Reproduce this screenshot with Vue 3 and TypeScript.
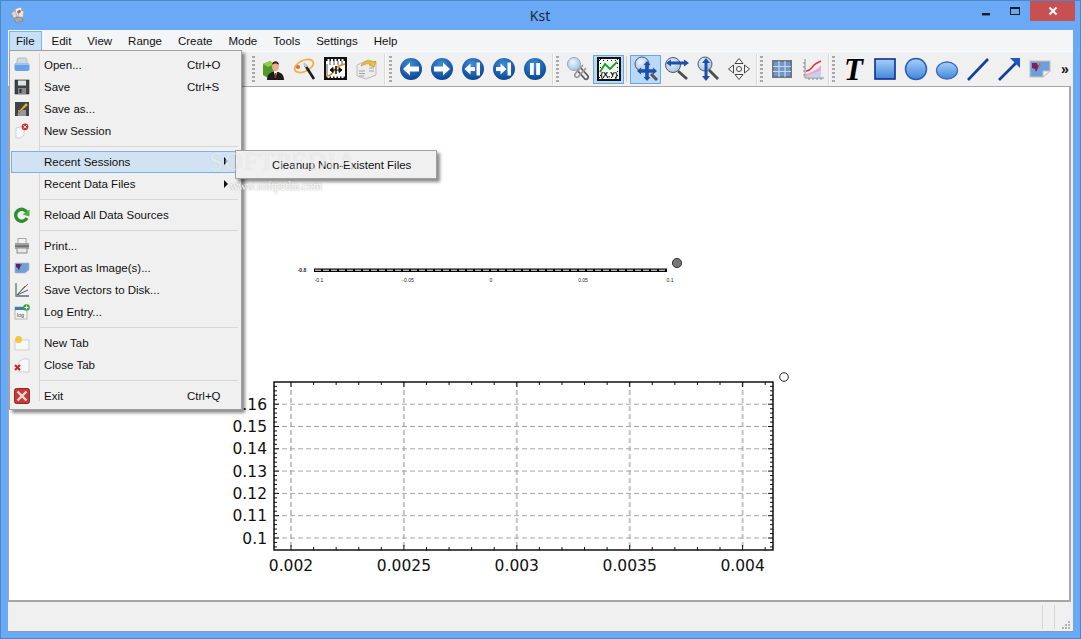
<script setup lang="ts">
// Kst main window with the File menu open and the Recent Sessions submenu showing.
const menus = ['File', 'Edit', 'View', 'Range', 'Create', 'Mode', 'Tools', 'Settings', 'Help']

// Screen-space geometry of the lower plot, read off the reference.
const X0 = 291
const X_STEP = 112.9
const Y0 = 538
const Y_STEP = 22.3
const LEFT = 274
const RIGHT = 773
const TOP = 382
const BOTTOM = 550

const xMajor = ['0.002', '0.0025', '0.003', '0.0035', '0.004'].map((t, i) => ({ t, x: X0 + i * X_STEP }))
const yMajor = ['0.1', '0.11', '0.12', '0.13', '0.14', '0.15', '0.16'].map((t, i) => ({ t, y: Y0 - i * Y_STEP }))

const xMinor: number[] = []
for (let i = -1; i < 25; i++) {
  const x = X0 + (i * X_STEP) / 5
  if (x > LEFT && x < RIGHT && i % 5 !== 0) xMinor.push(x)
}
const yMinor: number[] = []
for (let i = -2; i < 36; i++) {
  const y = Y0 - (i * Y_STEP) / 5
  if (y > TOP && y < BOTTOM && i % 5 !== 0) yMinor.push(y)
}

const miniLabels = [
  { t: '-0.1', x: 319 },
  { t: '-0.05', x: 408 },
  { t: '0', x: 491 },
  { t: '0.05', x: 583 },
  { t: '0.1', x: 670 }
]
</script>

<template>
  <div class="window">
    <svg class="defs" width="0" height="0" aria-hidden="true">
      <defs>
        <radialGradient id="navBlue" cx="45%" cy="30%" r="75%">
          <stop offset="0" stop-color="#3f8fd8" />
          <stop offset="1" stop-color="#06408f" />
        </radialGradient>
        <linearGradient id="shapeBlue" x1="0" y1="0" x2="0" y2="1">
          <stop offset="0" stop-color="#a9d0f5" />
          <stop offset="1" stop-color="#3f86dc" />
        </linearGradient>
        <radialGradient id="lens" cx="40%" cy="35%" r="70%">
          <stop offset="0" stop-color="#eef5fc" />
          <stop offset="1" stop-color="#9cc0e2" />
        </radialGradient>
      </defs>
    </svg>

    <header class="titlebar">
      <svg class="app-icon" width="18" height="18" viewBox="0 0 18 18">
        <path d="M2 7l6-4 3 5-6 5z" fill="#d8d8d8" stroke="#8f8f8f" stroke-width=".7" />
        <path d="M6 3l6-2 2 7-6 3z" fill="#f5f5f5" stroke="#9a9a9a" stroke-width=".7" />
        <path d="M10 4l5 1-1 7-5-1z" fill="#e6e6e6" stroke="#9a9a9a" stroke-width=".7" />
        <path d="M8 5l3-1 1 2-3 2z" fill="#c9544f" />
        <path d="M5 12l8-1 1 4-7 2z" fill="#a8a8a8" stroke="#777" stroke-width=".5" />
      </svg>
      <span class="title">Kst</span>
      <div class="caption">
        <svg class="cap-btn" width="27" height="20" viewBox="0 0 27 20"><rect x="6" y="12" width="8" height="2.4" fill="#1b1b1b" /></svg>
        <svg class="cap-btn" width="27" height="20" viewBox="0 0 27 20"><rect x="7.500" y="6.500" width="9" height="7" fill="none" stroke="#1b1b1b" /><rect x="7" y="6" width="10" height="2" fill="#1b1b1b" /></svg>
        <div class="cap-close">
          <svg width="10" height="10" viewBox="0 0 10 10"><path d="M1.500 1.500l7 7M8.500 1.500l-7 7" stroke="#fff" stroke-width="2" /></svg>
        </div>
      </div>
    </header>

    <div class="client">
      <nav class="menubar">
        <span v-for="(m, i) in menus" :key="m" class="menu-title" :class="{ open: i === 0 }">{{ m }}</span>
      </nav>

      <div class="toolbar">
        <div class="tb-hidden"></div>

        <div class="tg">
          <i class="grip"></i>
          <span class="tb">
            <svg width="26" height="26" viewBox="0 0 26 26">
              <path d="M2 8l7-3 4 3v11l-6 3-5-3z" fill="#4f9a2b" />
              <path d="M9 5l4 3-6 3-5-3z" fill="#8bd14c" />
              <path d="M6 24c0-6 4-8 6-8h4c3 0 7 2 7 8z" fill="#1c1c1c" />
              <path d="M13 16l1.500 6 1.500-6z" fill="#fff" /><path d="M14 17h1l.5 5h-2z" fill="#b8252a" />
              <ellipse cx="14.500" cy="10.500" rx="3.600" ry="4.800" fill="#e5b08c" />
              <path d="M11 9c0-5 7-5 7 0-2-2-5-2-7 0z" fill="#3c2415" />
            </svg>
          </span>
          <span class="tb">
            <svg width="26" height="26" viewBox="0 0 26 26">
              <ellipse cx="12" cy="10" rx="10" ry="5.500" transform="rotate(-25 12 10)" fill="none" stroke="#f2b04a" stroke-width="1.800" />
              <circle cx="6" cy="11" r="2" fill="#e2682d" />
              <path d="M13 9l9 14" stroke="#1b1b1b" stroke-width="2.600" />
              <path d="M12 7l2.500 4" stroke="#c9c9c9" stroke-width="2.600" />
            </svg>
          </span>
          <span class="tb">
            <svg width="24" height="24" viewBox="0 0 24 24">
              <rect x="1" y="1" width="21" height="21" fill="#fff" stroke="#111" stroke-width="2" />
              <path d="M2 3h20M2 20.500h20" stroke="#111" stroke-width="2" stroke-dasharray="1.500 2" />
              <path d="M3 7v12M6 4v4M10 4v4M14 4v4M18 4v4" stroke="#555" />
              <path d="M3 19c6 0 6-6 10-9 3-2 5-2 8-3" fill="none" stroke="#d98a24" stroke-width="1.600" />
              <path d="M6 13h12M6 13l3-2.500v5zM18 13l-3-2.500v5z" stroke="#111" fill="#111" />
              <path d="M12 9v8" stroke="#111" stroke-width="1.500" />
            </svg>
          </span>
          <span class="tb">
            <svg width="24" height="24" viewBox="0 0 24 24">
              <path d="M2 8l11-5 8 2v13l-10 4-9-3z" fill="#ececec" stroke="#bdbdbd" />
              <path d="M4 14h6M4 16.500h6M4 19h5M14 11h5M14 14h5" stroke="#a2a2a2" />
              <path d="M6 9c2-5 8-6 12-4l3-1-2 6-5-2 2-1c-3-1-6 0-10 2z" fill="#f1c232" stroke="#b88a16" stroke-width=".6" />
            </svg>
          </span>
        </div>
        <i class="tb-line wide"></i>

        <div class="tg">
          <i class="grip"></i>
          <span class="tb">
            <svg width="24" height="24" viewBox="0 0 24 24"><circle cx="12" cy="12" r="11" fill="url(#navBlue)" /><path d="M4 12l7-6.500V9.500h9v5h-9v4z" fill="#fff" /></svg>
          </span>
          <span class="tb">
            <svg width="24" height="24" viewBox="0 0 24 24"><circle cx="12" cy="12" r="11" fill="url(#navBlue)" /><path d="M20 12l-7-6.500V9.500H4v5h9v4z" fill="#fff" /></svg>
          </span>
          <span class="tb">
            <svg width="24" height="24" viewBox="0 0 24 24"><circle cx="12" cy="12" r="11" fill="url(#navBlue)" /><path d="M3.500 12l6-5.500V10h4.500v4H9.500v3.500z" fill="#fff" /><rect x="15.500" y="5.500" width="3.500" height="13" fill="#fff" /></svg>
          </span>
          <span class="tb">
            <svg width="24" height="24" viewBox="0 0 24 24"><circle cx="12" cy="12" r="11" fill="url(#navBlue)" /><path d="M14.500 12l-6-5.500V10H4v4h4.500v3.500z" fill="#fff" /><rect x="15.500" y="5.500" width="3.500" height="13" fill="#fff" /></svg>
          </span>
          <span class="tb">
            <svg width="24" height="24" viewBox="0 0 24 24"><circle cx="12" cy="12" r="11" fill="url(#navBlue)" /><rect x="7" y="6" width="3.800" height="12" fill="#fff" /><rect x="13.200" y="6" width="3.800" height="12" fill="#fff" /></svg>
          </span>
        </div>
        <i class="tb-line"></i>

        <div class="tg">
          <i class="grip"></i>
          <span class="tb">
            <svg width="26" height="26" viewBox="0 0 26 26">
              <path d="M12 14l8 9c2 1 4-1 3-3l-8-9" fill="none" stroke="#5f5f5f" stroke-width="1.800" />
              <path d="M18 9l-8 9c-1 2 1 4 3 3l8-9" fill="none" stroke="#9a9a9a" stroke-width="1.800" />
              <circle cx="9" cy="8" r="6.500" fill="url(#lens)" stroke="#90a8c0" />
            </svg>
          </span>
          <span class="tb active">
            <svg width="24" height="24" viewBox="0 0 24 24">
              <rect x="1" y="1" width="22" height="22" fill="#f5f8f2" stroke="#111" stroke-width="2" />
              <path d="M2 3.500h20M2 20.500h20M3.500 2v20M20.500 2v20" stroke="#111" stroke-dasharray="1 3" />
              <path d="M3 15l5-8 5 5 7-7" fill="none" stroke="#16a21f" stroke-width="1.800" />
              <text x="12" y="19.500" class="xy">(X,Y)</text>
            </svg>
          </span>
          <i class="tb-inner"></i>
          <span class="tb active">
            <svg width="26" height="26" viewBox="0 0 26 26">
              <circle cx="9" cy="8" r="7" fill="url(#lens)" stroke="#4a5b6e" />
              <path d="M18 18l6 6" stroke="#555" stroke-width="3" />
              <path d="M14 8v14M7 15h14" stroke="#1f4fa8" stroke-width="3.600" />
              <path d="M14 5l3.500 4h-7zM14 25l3.500-4h-7zM4 15l4-3.500v7zM24 15l-4-3.500v7z" fill="#1f4fa8" />
            </svg>
          </span>
          <span class="tb">
            <svg width="26" height="26" viewBox="0 0 26 26">
              <path d="M14 15l9 8" stroke="#4d4d4d" stroke-width="2.800" />
              <circle cx="9" cy="9" r="7.500" fill="url(#lens)" stroke="#4a5b6e" />
              <path d="M5 7h16" stroke="#1f4fa8" stroke-width="3" />
              <path d="M2 7l5-3.500v7zM25 7l-5-3.500v7z" fill="#1f4fa8" />
            </svg>
          </span>
          <span class="tb">
            <svg width="26" height="26" viewBox="0 0 26 26">
              <path d="M14 14l9 9" stroke="#4d4d4d" stroke-width="2.800" />
              <circle cx="10" cy="8" r="7" fill="url(#lens)" stroke="#4a5b6e" />
              <path d="M11 5v17" stroke="#1f4fa8" stroke-width="3" />
              <path d="M11 2l4 5H7zM11 25l4-5H7z" fill="#1f4fa8" />
            </svg>
          </span>
          <span class="tb">
            <svg width="24" height="24" viewBox="0 0 24 24" fill="#fff" stroke="#444">
              <path d="M12 1.500l4 5h-8zM12 22.500l4-5H8zM1.500 12l5-4v8zM22.500 12l-5-4v8z" />
              <circle cx="12" cy="12" r="2.500" />
            </svg>
          </span>
        </div>
        <i class="tb-line"></i>

        <div class="tg">
          <i class="grip"></i>
          <span class="tb">
            <svg width="22" height="22" viewBox="0 0 22 22">
              <rect x="2" y="3" width="18" height="16" fill="#7097c9" stroke="#6a7886" stroke-width="2" />
              <path d="M2 8.500h18M2 13.500h18M8 3v16M14 3v16" stroke="#c9d9ec" stroke-width="1.200" />
            </svg>
          </span>
          <span class="tb">
            <svg width="24" height="24" viewBox="0 0 24 24">
              <path d="M4 2v19h19" fill="none" stroke="#8a8a8a" />
              <path d="M5 20l4-2 5-2 6-2v6z" fill="#bcd6f2" />
              <path d="M5 17c5-1 6-3 9-4 3-1 4-3 6-5v6l-6 2-5 2-4 2z" fill="#f2a6d6" />
              <path d="M5 14c4 0 6-3 8-6 2-2 5-3 7-4" fill="none" stroke="#d8383f" stroke-width="1.500" />
              <path d="M2 6h2M2 10h2M2 14h2M2 18h2M8 21v2M12 21v2M16 21v2M20 21v2" stroke="#8a8a8a" />
            </svg>
          </span>
        </div>
        <i class="tb-line narrow"></i>

        <div class="tg">
          <i class="grip"></i>
          <span class="tb"><span class="tool-t">T</span></span>
          <span class="tb">
            <svg width="22" height="22" viewBox="0 0 22 22"><rect x="1" y="1" width="20" height="20" fill="url(#shapeBlue)" stroke="#0c2f96" stroke-width="1.600" /></svg>
          </span>
          <span class="tb">
            <svg width="24" height="24" viewBox="0 0 24 24"><circle cx="12" cy="12" r="10.500" fill="url(#shapeBlue)" stroke="#2a5cb8" stroke-width="1.500" /></svg>
          </span>
          <span class="tb">
            <svg width="24" height="24" viewBox="0 0 24 24"><ellipse cx="12" cy="13.500" rx="10.500" ry="8.500" fill="url(#shapeBlue)" stroke="#3e68c4" stroke-width="1.300" /></svg>
          </span>
          <span class="tb">
            <svg width="24" height="24" viewBox="0 0 24 24"><path d="M2 23L22 2" stroke="#123fa0" stroke-width="2.600" /></svg>
          </span>
          <span class="tb">
            <svg width="24" height="24" viewBox="0 0 24 24"><path d="M2 23L19 6" stroke="#123fa0" stroke-width="2.600" /><path d="M13 1h10v10z" fill="#1b56c4" /></svg>
          </span>
          <span class="tb">
            <svg width="24" height="24" viewBox="0 0 24 24">
              <path d="M2 4h20v10l-7 6H2z" fill="#6f9fd8" stroke="#c2c2c2" stroke-width="1.200" />
              <path d="M4 6h8l-2 5-2 4-1-3-3-1z" fill="#7c1f63" />
              <path d="M9 6h3l-2 3z" fill="#e0a03a" />
              <path d="M15 20l7-6h-7z" fill="#f3f3f3" stroke="#c2c2c2" />
            </svg>
          </span>
          <span class="chevrons">»</span>
        </div>
      </div>

      <main class="canvas">
        <svg class="sheet" width="1062" height="515" viewBox="9 87 1062 515">
          <!-- small squashed plot -->
          <text x="302" y="272" class="mini-y">-0.8</text>
          <rect x="314" y="268.500" width="353" height="3.500" fill="#000" />
          <line x1="315" y1="270.200" x2="666" y2="270.200" stroke="#fff" stroke-width="1" stroke-dasharray="6 2" />
          <text v-for="l in miniLabels" :key="l.t" :x="l.x" y="282" class="mini-x">{{ l.t }}</text>
          <circle cx="677" cy="263" r="4.600" fill="#777" stroke="#333" />

          <!-- main plot -->
          <line v-for="t in xMajor" :key="t.t" :x1="t.x" :y1="TOP" :x2="t.x" :y2="BOTTOM" class="grid-v" />
          <line v-for="t in yMajor" :key="t.t" :x1="LEFT" :y1="t.y" :x2="RIGHT" :y2="t.y" class="grid-h" />

          <g class="ticks">
            <template v-for="x in xMinor" :key="x">
              <line :x1="x" :y1="TOP" :x2="x" :y2="TOP + 3" />
              <line :x1="x" :y1="BOTTOM" :x2="x" :y2="BOTTOM - 3" />
            </template>
            <template v-for="t in xMajor" :key="t.t">
              <line :x1="t.x" :y1="TOP" :x2="t.x" :y2="TOP + 5" />
              <line :x1="t.x" :y1="BOTTOM" :x2="t.x" :y2="BOTTOM - 5" />
            </template>
            <template v-for="y in yMinor" :key="y">
              <line :x1="LEFT" :y1="y" :x2="LEFT + 3" :y2="y" />
              <line :x1="RIGHT" :y1="y" :x2="RIGHT - 3" :y2="y" />
            </template>
            <template v-for="t in yMajor" :key="t.t">
              <line :x1="LEFT" :y1="t.y" :x2="LEFT + 5" :y2="t.y" />
              <line :x1="RIGHT" :y1="t.y" :x2="RIGHT - 5" :y2="t.y" />
            </template>
          </g>
          <rect :x="LEFT" :y="TOP" :width="RIGHT - LEFT" :height="BOTTOM - TOP" class="plot-box" />

          <text v-for="t in yMajor" :key="t.t" :x="LEFT - 7" :y="t.y + 5.500" class="label" text-anchor="end">{{ t.t }}</text>
          <text v-for="t in xMajor" :key="t.t" :x="t.x" y="571" class="label" text-anchor="middle">{{ t.t }}</text>
          <circle cx="784" cy="377" r="4.300" fill="#fff" stroke="#222" />
        </svg>
      </main>

      <footer class="statusbar">
        <i class="status-sep"></i>
        <i class="status-sep"></i>
        <svg class="size-grip" width="9" height="9" viewBox="0 0 9 9" fill="#b4b4b4">
          <rect x="6" y="0" width="2" height="2" /><rect x="3" y="3" width="2" height="2" /><rect x="6" y="3" width="2" height="2" />
          <rect x="0" y="6" width="2" height="2" /><rect x="3" y="6" width="2" height="2" /><rect x="6" y="6" width="2" height="2" />
        </svg>
      </footer>

      <!-- open File menu -->
      <div class="menu">
        <div class="gutter-line"></div>
        <div class="item">
          <svg class="ico" width="16" height="16" viewBox="0 0 16 16">
            <path d="M3 3q0-2 2-2h6q2 0 2 2v4H3z" fill="#d4d8dc" stroke="#b5bcc4" />
            <rect x="0.500" y="6" width="15" height="8" rx="2" fill="#6aa0e8" />
            <rect x="1" y="6" width="14" height="2" fill="#9cc3f3" />
          </svg>
          <span class="lbl">Open...</span><span class="key">Ctrl+O</span>
        </div>
        <div class="item">
          <svg class="ico" width="16" height="16" viewBox="0 0 16 16">
            <rect x="1" y="1" width="14" height="14" fill="#3e4347" stroke="#2a2a2a" stroke-width=".6" />
            <rect x="4" y="1.500" width="8" height="5" fill="#dfe3e6" />
            <rect x="4" y="9" width="8" height="6" fill="#85898d" /><rect x="5.500" y="10" width="2" height="4" fill="#2f3235" />
          </svg>
          <span class="lbl">Save</span><span class="key">Ctrl+S</span>
        </div>
        <div class="item">
          <svg class="ico" width="16" height="16" viewBox="0 0 16 16">
            <rect x="1" y="1" width="14" height="14" fill="#3e4347" />
            <rect x="4" y="9" width="8" height="6" fill="#96999c" />
            <path d="M3 14l2-4 7-8 2 2-8 7z" fill="#e5b73a" stroke="#7a5d14" stroke-width=".5" />
          </svg>
          <span class="lbl">Save as...</span>
        </div>
        <div class="item">
          <svg class="ico" width="16" height="16" viewBox="0 0 16 16">
            <path d="M2 5l8-2v9l-4 3H2z" fill="#f9f9f9" stroke="#cfcfcf" />
            <circle cx="11" cy="3.800" r="3.400" fill="#c8322d" />
            <path d="M9.500 2.300l3 3M12.500 2.300l-3 3" stroke="#fff" />
          </svg>
          <span class="lbl">New Session</span>
        </div>
        <div class="sep"></div>
        <div class="item hot">
          <span class="lbl">Recent Sessions</span><i class="arrow"></i>
        </div>
        <div class="item">
          <span class="lbl">Recent Data Files</span><i class="arrow"></i>
        </div>
        <div class="sep"></div>
        <div class="item">
          <svg class="ico" width="16" height="16" viewBox="0 0 16 16">
            <path d="M13 5.500A6 6 0 1 0 13 11" fill="none" stroke="#2f8f2c" stroke-width="3.400" />
            <path d="M8.500 7.500l7-5v7z" fill="#45b53a" />
          </svg>
          <span class="lbl">Reload All Data Sources</span>
        </div>
        <div class="sep"></div>
        <div class="item">
          <svg class="ico" width="16" height="16" viewBox="0 0 16 16">
            <rect x="4" y="0.500" width="8" height="5" fill="#f3f3f3" stroke="#a8a8a8" />
            <rect x="1" y="5" width="14" height="6" fill="#a2a2a2" /><rect x="1" y="7.500" width="14" height="1.200" fill="#5d5d5d" />
            <rect x="3" y="10" width="10" height="5" fill="#e8e8e8" stroke="#8c8c8c" />
          </svg>
          <span class="lbl">Print...</span>
        </div>
        <div class="item">
          <svg class="ico" width="16" height="16" viewBox="0 0 16 16">
            <path d="M1 3h14v7l-4 3H1z" fill="#6f9fd8" stroke="#b8b8b8" stroke-width=".7" />
            <path d="M2 4h6l-2 3-1 4-1-3-2-1z" fill="#5b1f63" /><path d="M6 4h2l-1 2z" fill="#d6483f" />
          </svg>
          <span class="lbl">Export as Image(s)...</span>
        </div>
        <div class="item">
          <svg class="ico" width="16" height="16" viewBox="0 0 16 16">
            <path d="M2 1v13h13" fill="none" stroke="#777" stroke-width="1.400" />
            <path d="M3 13L14 2" stroke="#d8383f" /><path d="M3 13L11 4" stroke="#2f9a3c" /><path d="M3 13l11-5" stroke="#3b4dad" />
            <rect x="2" y="13" width="13" height="2" fill="#8a8a8a" />
          </svg>
          <span class="lbl">Save Vectors to Disk...</span>
        </div>
        <div class="item">
          <svg class="ico" width="16" height="16" viewBox="0 0 16 16">
            <rect x="1" y="3" width="12" height="12" fill="#f5f5f5" stroke="#b6b6b6" />
            <rect x="1" y="3" width="12" height="3" fill="#3b7fa8" />
            <text x="6.500" y="12.500" class="log">log</text>
            <circle cx="12.500" cy="3.500" r="3.300" fill="#2fa33a" />
            <path d="M10.500 3.500h4M12.500 1.500v4" stroke="#fff" />
          </svg>
          <span class="lbl">Log Entry...</span>
        </div>
        <div class="sep"></div>
        <div class="item">
          <svg class="ico" width="16" height="16" viewBox="0 0 16 16">
            <path d="M1 5h14v10H1z" fill="#f8f8f8" stroke="#cfcfcf" />
            <circle cx="4.500" cy="4.500" r="3.500" fill="#f4c63a" />
          </svg>
          <span class="lbl">New Tab</span>
        </div>
        <div class="item">
          <svg class="ico" width="16" height="16" viewBox="0 0 16 16">
            <path d="M5 5l4-3h6v13H5z" fill="#f8f8f8" stroke="#cfcfcf" />
            <path d="M1 8l5 5M6 8l-5 5" stroke="#c42a28" stroke-width="2.200" />
          </svg>
          <span class="lbl">Close Tab</span>
        </div>
        <div class="sep"></div>
        <div class="item">
          <svg class="ico" width="16" height="16" viewBox="0 0 16 16">
            <rect x="0.500" y="0.500" width="15" height="15" rx="2" fill="#c73a33" stroke="#8e2a26" />
            <path d="M3.500 3.500l9 9M12.500 3.500l-9 9" stroke="#f1d9d7" stroke-width="2.400" />
          </svg>
          <span class="lbl">Exit</span><span class="key">Ctrl+Q</span>
        </div>
      </div>

      <div class="submenu">Cleanup Non-Existent Files</div>

      <div class="watermark">
        <span class="wm-big">SOFTPEDIA</span>
        <span class="wm-small">www.softpedia.com</span>
      </div>
    </div>
  </div>
</template>

<style>
html,
body {
  margin: 0;
  overflow: hidden;
}
</style>

<style scoped>
.window {
  width: 1081px;
  height: 639px;
  box-sizing: border-box;
  display: flex;
  flex-direction: column;
  background: #69a9f5;
  border: 1px solid #4f86c6;
  font-family: 'Liberation Sans', 'Noto Sans', sans-serif;
  font-size: 11.500px;
  color: #111;
}
.defs {
  position: absolute;
}
.titlebar {
  flex: 0 0 29px;
  position: relative;
  display: flex;
  align-items: center;
  justify-content: center;
}
.app-icon {
  position: absolute;
  left: 8px;
  top: 5px;
}
.title {
  font-family: 'Noto Sans', sans-serif;
  font-size: 14px;
  color: #1d2733;
  margin-left: -1px;
}
.caption {
  position: absolute;
  right: 5px;
  top: 0;
  display: flex;
}
.cap-close {
  width: 45px;
  height: 20px;
  background: #c75050;
  display: flex;
  align-items: center;
  justify-content: center;
}
.cap-btn {
  display: block;
}
.client {
  flex: 1;
  position: relative;
  margin: 0 7px 6px;
  display: flex;
  flex-direction: column;
  background: #f0f0f0;
  border-bottom: 1px solid #8f9aa6;
  min-height: 0;
}
.menubar {
  flex: 0 0 21px;
  display: flex;
  background: #f4f5f7;
  padding: 1px 0 0 1px;
  box-sizing: border-box;
}
.menu-title {
  padding: 0 8px;
  line-height: 21px;
  height: 20px;
  box-sizing: border-box;
  white-space: nowrap;
}
.menu-title.open {
  background: #c8e0f6;
  box-shadow: inset 0 0 0 1px #7db4e8;
  margin-right: 2px;
  padding: 0 7px;
}
.toolbar {
  flex: 0 0 35px;
  display: flex;
  align-items: center;
  background: #f0f0f0;
  border-top: 1px solid #fbfbfb;
  box-sizing: border-box;
}
.tb-hidden {
  flex: 0 0 243px;
}
.tg {
  display: flex;
  align-items: center;
  height: 100%;
}
.grip {
  width: 3px;
  height: 26px;
  margin: 0 3px 0 1px;
  background: repeating-linear-gradient(to bottom, #a8a8a8 0 2px, transparent 2px 4px);
}
.tb-line {
  width: 1px;
  height: 31px;
  margin: 0 2px;
  background: #d8d8d8;
  box-shadow: 1px 0 0 #fff;
}
.tb-line.wide {
  margin-right: 3px;
}
.tb-line.narrow {
  margin: 0 2px 0 0;
}
.tb-inner {
  width: 1px;
  height: 26px;
  margin: 0 3px 0 2px;
  background: #cfcfcf;
}
.tb {
  width: 31px;
  height: 29px;
  display: flex;
  align-items: center;
  justify-content: center;
  box-sizing: border-box;
}
.tb.active {
  background: #b9d9f6;
  border: 1px solid #66a7e8;
}
.tool-t {
  font-family: 'Liberation Serif', serif;
  font-weight: 700;
  font-style: italic;
  font-size: 31px;
  line-height: 29px;
  color: #000;
}
.chevrons {
  margin-left: 6px;
  font-size: 14px;
  font-weight: 700;
  line-height: 16px;
}
.xy {
  font-size: 7.500px;
  font-weight: 700;
  text-anchor: middle;
}
.log {
  font-size: 5.500px;
  text-anchor: middle;
  fill: #444;
}
.canvas {
  flex: 1;
  min-height: 0;
  background: #fff;
  border-right: 2px solid #a6a6a6;
  border-bottom: 2px solid #a6a6a6;
  border-top: 1px solid #a6a6a6;
  border-left: 1px solid #a6a6a6;
  margin-right: 2px;
  overflow: hidden;
}
.sheet {
  display: block;
}
.mini-y,
.mini-x {
  font-size: 5px;
  fill: #222;
  text-anchor: middle;
}
.mini-y {
  font-weight: 700;
}
.grid-v {
  stroke: #c4c4c4;
  stroke-width: 2;
  stroke-dasharray: 5 3;
}
.grid-h {
  stroke: #a6a6a6;
  stroke-width: 1;
  stroke-dasharray: 5 3;
}
.ticks line {
  stroke: #111;
  stroke-width: 1;
}
.plot-box {
  fill: none;
  stroke: #000;
  stroke-width: 1.400;
}
.label {
  font-family: 'DejaVu Sans', sans-serif;
  font-size: 15.500px;
  fill: #111;
}
.statusbar {
  flex: 0 0 29px;
  display: flex;
  align-items: center;
  justify-content: flex-end;
  position: relative;
  padding-right: 18px;
  gap: 11px;
}
.status-sep {
  width: 1px;
  height: 24px;
  background: #d6d6d6;
}
.size-grip {
  position: absolute;
  right: 2px;
  bottom: 1px;
}
.menu {
  position: absolute;
  left: 1px;
  top: 20px;
  width: 233px;
  box-sizing: border-box;
  padding: 3px 1px 2px;
  background: #f0f0f0;
  border: 1px solid #a0a0a0;
  box-shadow: 3px 3px 3px rgba(0, 0, 0, 0.45);
}
.gutter-line {
  position: absolute;
  left: 29px;
  top: 2px;
  bottom: 8px;
  width: 1px;
  background: #d9d9d9;
}
.item {
  height: 22px;
  position: relative;
  display: flex;
  align-items: center;
  box-sizing: border-box;
}
.item.hot {
  background: #d1e2f2;
  border: 1px solid #7db0e6;
}
.ico {
  position: absolute;
  left: 3px;
  top: 3px;
}
.lbl {
  position: absolute;
  left: 33px;
  top: 3px;
  line-height: 17px;
  white-space: nowrap;
}
.item.hot .lbl {
  left: 32px;
  top: 2px;
}
.key {
  position: absolute;
  left: 176px;
  top: 3px;
  line-height: 17px;
  white-space: nowrap;
}
.arrow {
  position: absolute;
  left: 213px;
  top: 7px;
  border-left: 4px solid #111;
  border-top: 4px solid transparent;
  border-bottom: 4px solid transparent;
}
.item.hot .arrow {
  left: 212px;
  top: 5px;
}
.sep {
  height: 1px;
  margin: 4px 2px 4px 29px;
  background: #d7d7d7;
}
.submenu {
  position: absolute;
  left: 227px;
  top: 120px;
  width: 202px;
  height: 29px;
  box-sizing: border-box;
  padding-left: 36px;
  line-height: 29px;
  background: #f0f0f0;
  border: 1px solid #a0a0a0;
  box-shadow: 3px 3px 3px rgba(0, 0, 0, 0.45);
  white-space: nowrap;
}
.watermark {
  position: absolute;
  left: 201px;
  top: 117px;
  display: flex;
  flex-direction: column;
  pointer-events: none;
}
.wm-big {
  font-family: 'Liberation Serif', serif;
  font-size: 25px;
  letter-spacing: 1.500px;
  line-height: 30px;
  color: rgba(255, 255, 255, 0.6);
  text-shadow: 0 0 1px rgba(130, 130, 130, 0.3);
  white-space: nowrap;
}
.wm-small {
  font-family: 'Liberation Serif', serif;
  font-size: 11.500px;
  line-height: 18px;
  margin-left: 21px;
  color: rgba(255, 255, 255, 0.9);
  text-shadow: 0 0 2px rgba(110, 110, 110, 0.7);
  white-space: nowrap;
}
</style>
